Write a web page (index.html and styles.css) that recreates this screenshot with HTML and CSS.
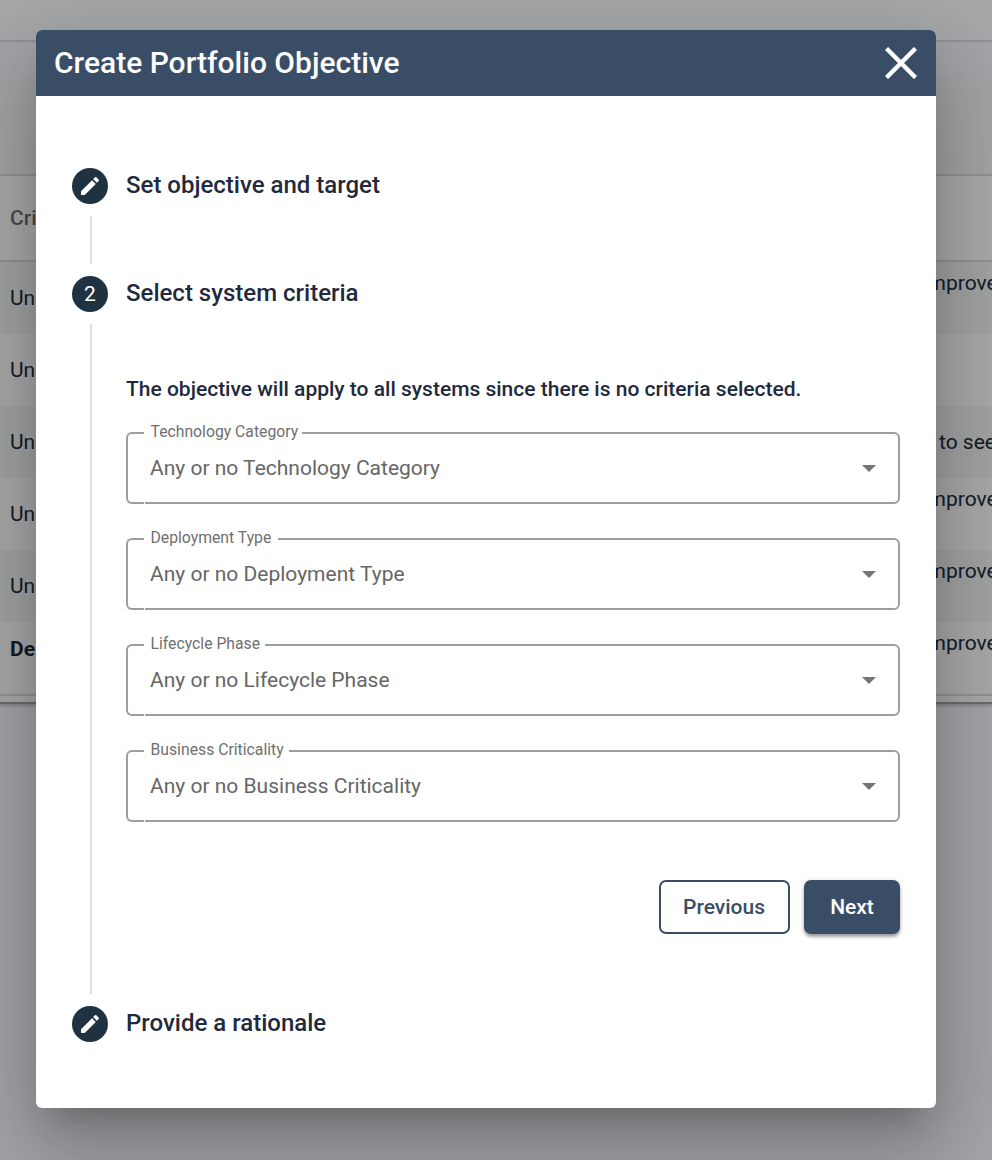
FILE: index.html
```html
<!DOCTYPE html>
<html lang="en">
<head>
<meta charset="utf-8">
<title>Create Portfolio Objective</title>
<link rel="stylesheet" href="styles.css">
</head>
<body>
<svg class="defs" width="0" height="0" aria-hidden="true">
  <symbol id="edit" viewBox="0 0 24 24"><path d="M3 17.25V21h3.75L17.81 9.94l-3.75-3.75L3 17.25zM20.71 7.04c.39-.39.39-1.02 0-1.41l-2.34-2.34a.9959.9959 0 0 0-1.41 0l-1.83 1.83 3.75 3.75 1.83-1.83z"/></symbol>
</svg>
<div class="page">
  <div class="toolbar"></div>
  <div class="subbar"></div>
  <div class="card">
    <div class="banner"></div>
    <div class="row head"><span>Cri</span></div>
    <div class="row odd"><span>Un</span><span class="note">improve</span></div>
    <div class="row"><span>Un</span></div>
    <div class="row odd"><span>Un</span><span class="note mid">to see</span></div>
    <div class="row"><span>Un</span><span class="note">improve</span></div>
    <div class="row odd"><span>Un</span><span class="note">improve</span></div>
    <div class="row last"><span class="strong">De</span><span class="note">improve</span></div>
  </div>
</div>
<div class="overlay">
  <div class="dialog" role="dialog">
    <header class="dialog-header">
      <h1 class="title">Create Portfolio Objective</h1>
      <svg class="close" viewBox="0 0 32 32"><path d="M1.5 1.5l29 29M30.5 1.5l-29 29"/></svg>
    </header>
    <div class="stepper">
      <div class="step">
        <div class="rail"><span class="badge"><svg class="pencil"><use href="#edit"/></svg></span><span class="line"></span></div>
        <div class="step-main first"><h2 class="label">Set objective and target</h2></div>
      </div>
      <div class="step">
        <div class="rail"><span class="badge">2</span><span class="line"></span></div>
        <div class="step-main">
          <h2 class="label">Select system criteria</h2>
          <p class="message">The objective will apply to all systems since there is no criteria selected.</p>
          <div class="fields">
            <div class="field"><div class="outline-start"></div><div class="legend"><span>Technology Category</span></div><div class="outline-end"></div><div class="value">Any or no Technology Category<i class="arrow"></i></div></div>
            <div class="field"><div class="outline-start"></div><div class="legend deployment"><span>Deployment Type</span></div><div class="outline-end"></div><div class="value">Any or no Deployment Type<i class="arrow"></i></div></div>
            <div class="field"><div class="outline-start"></div><div class="legend lifecycle"><span>Lifecycle Phase</span></div><div class="outline-end"></div><div class="value">Any or no Lifecycle Phase<i class="arrow"></i></div></div>
            <div class="field"><div class="outline-start"></div><div class="legend business"><span>Business Criticality</span></div><div class="outline-end"></div><div class="value">Any or no Business Criticality<i class="arrow"></i></div></div>
          </div>
          <div class="actions"><button class="btn previous">Previous</button><button class="btn next">Next</button></div>
        </div>
      </div>
      <div class="step">
        <div class="rail"><span class="badge"><svg class="pencil"><use href="#edit"/></svg></span></div>
        <div class="step-main"><h2 class="label">Provide a rationale</h2></div>
      </div>
    </div>
  </div>
</div>
</body>
</html>
```
FILE: styles.css
```css
* { box-sizing: border-box; }
body { margin: 0; height: 1160px; overflow: hidden; font-family: Roboto, "Liberation Sans", sans-serif; color: #1f2a3c; }
.defs { position: absolute; }
h1, h2, p { margin: 0; font-weight: 500; }

.page { height: 1160px; background: #f2f3fa; overflow: hidden; }
.toolbar { height: 42px; background: #f7f8f9; border-bottom: 2px solid #d5d6d8; }
.subbar { height: 36px; background: #f2f3fa; }
.card { height: 626px; background: #fafafa; border-bottom: 2px solid #a0a0a0; box-shadow: 0 2px 3px rgba(0,0,0,.2); }
.banner { height: 98px; background: #eff3f1; border-bottom: 2px solid #d5d7d6; }
.row { height: 72px; padding: 0 0 0 10px; display: flex; justify-content: space-between; align-items: center; font-size: 21px; line-height: 24px; }
.row.head { height: 86px; color: #6b6d72; font-weight: 500; border-bottom: 2px solid #d8d8d8; }
.row.odd { background: #eef2f0; }
.row.last { height: 74px; border-bottom: 2px solid #d8d8d8; padding-bottom: 18px; }
.strong { font-weight: 700; }
.note { width: 69.5px; align-self: flex-start; margin-top: 9px; }
.note.mid { width: 53px; align-self: center; margin-top: 0; white-space: nowrap; }

.overlay { position: absolute; inset: 0; height: 1160px; padding: 30px 56px 52px 36px; background: rgba(0,0,0,.32); overflow: hidden; }
.dialog { width: 900px; height: 1078px; background: #fff; border-radius: 6px; overflow: hidden; box-shadow: 0 22px 30px -14px rgba(0,0,0,.2), 0 48px 76px 6px rgba(0,0,0,.14), 0 18px 92px 16px rgba(0,0,0,.12); }
.dialog-header { height: 66px; padding: 0 19px 0 18px; background: #3a4d66; display: flex; justify-content: space-between; align-items: center; color: #fff; }
.title { font-size: 30px; line-height: 40px; }
.close { width: 32px; height: 32px; stroke: #fff; stroke-width: 4.4; fill: none; }

.stepper { padding: 72px 36px 0; }
.step { display: flex; gap: 18px; }
.rail { width: 36px; display: flex; flex-direction: column; align-items: center; }
.badge { width: 36px; height: 36px; border-radius: 50%; background: #1f3242; color: #fff; font-size: 21px; display: flex; align-items: center; justify-content: center; }
.pencil { width: 24px; height: 24px; fill: #fff; }
.line { flex: 1; width: 2px; margin: 12px 0 12px 2px; background: #e0e0e0; }
.step-main { flex: 1; }
.step-main.first { height: 108px; }
.label { font-size: 24px; line-height: 34px; }
.message { margin-top: 64px; font-size: 21px; line-height: 30px; white-space: nowrap; }
.fields { margin-top: 28px; display: grid; gap: 34px; }
.field { height: 72px; display: grid; grid-template-columns: 18px auto 1fr; }
.outline-start, .outline-end, .legend { grid-row: 1; border: 2px solid #9e9e9e; }
.outline-start { grid-column: 1; border-right: 0; border-radius: 6px 0 0 6px; }
.legend { grid-column: 2; width: 157px; margin-left: 1px; border-width: 0 0 2px; color: #6f6f6f; font-size: 15.75px; white-space: nowrap; padding-left: 5.5px; }
.legend span { display: block; margin-top: -10px; line-height: 20px; }
.legend.deployment { width: 133px; }
.legend.lifecycle { width: 120px; }
.legend.business { width: 144px; }
.outline-end { grid-column: 3; border-left: 0; border-radius: 0 6px 6px 0; }
.value { grid-row: 1; grid-column: 1 / -1; padding: 0 24px; display: flex; align-items: center; justify-content: space-between; font-size: 21px; color: #666; }
.arrow { width: 14px; height: 7px; margin-top: 1px; background: #757575; clip-path: polygon(0 0, 100% 0, 50% 100%); }
.actions { margin: 58px 0 72px; display: flex; justify-content: flex-end; gap: 14px; }
.btn { height: 54px; border: 2px solid #3a4d66; border-radius: 7px; padding: 0; font: 500 21px/30px Roboto, sans-serif; }
.previous { width: 131px; padding-right: 1px; background: #fff; color: #3a4d66; }
.next { width: 96px; background: #3a4d66; color: #fff; box-shadow: 0 3px 3px rgba(0,0,0,.3), 0 1px 6px rgba(0,0,0,.15); }
```
